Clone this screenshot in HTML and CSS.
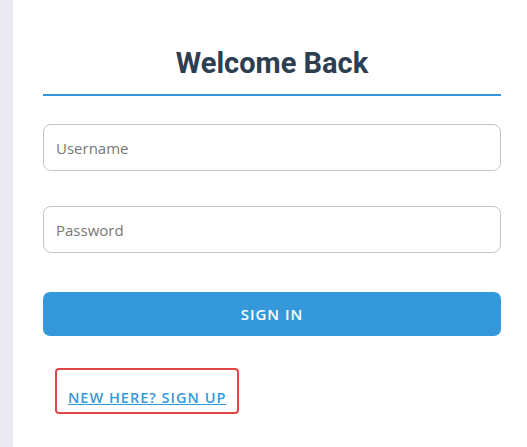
FILE: index.html
```html
<!DOCTYPE html>
<html lang="en">
<head>
    <meta charset="UTF-8">
    <meta name="viewport" content="width=device-width, initial-scale=1.0">
    <title>Sign In</title>
    <link rel="stylesheet" href="styles.css">
</head>
<body>
    <div class="page">
        <div class="sidebar"></div>
        <div class="container">
            <h1 class="title">Welcome Back</h1>
            <form class="login-form">
                <input type="text" class="field" placeholder="Username">
                <input type="password" class="field" placeholder="Password">
                <button type="button" class="btn-signin">Sign In</button>
            </form>
            <div class="signup">
                <a href="#" class="signup-link">New here? Sign up</a>
            </div>
        </div>
    </div>
</body>
</html>
```

FILE: styles.css
```css
html, body {
    margin: 0;
    padding: 0;
    height: 100%;
    background: #fff;
}
body {
    font-family: "Open Sans", "Noto Sans", sans-serif;
}
.page {
    display: flex;
    min-height: 100%;
}
.sidebar {
    width: 13px;
    background-color: #ebeaf0;
    flex-shrink: 0;
}
.container {
    flex: 1;
    padding: 0 26px 0 30px;
}
.title {
    font-family: Roboto, sans-serif;
    font-size: 29px;
    font-weight: 700;
    color: #2c3e50;
    text-align: center;
    margin: 45px 0 0;
    padding-bottom: 13px;
    border-bottom: 2px solid #3498db;
    line-height: 36px;
}
.login-form {
    display: flex;
    flex-direction: column;
    gap: 35px;
    margin-top: 28px;
}
.field {
    height: 47px;
    box-sizing: border-box;
    padding: 0 12px;
    font-family: "Open Sans", sans-serif;
    font-size: 15px;
    border: 1px solid #c4c4c4;
    border-radius: 8px;
    outline: none;
}
.field::placeholder {
    color: #777;
}
.btn-signin {
    height: 44px;
    margin-top: 4px;
    background-color: #3498db;
    color: #fff;
    border: none;
    border-radius: 7px;
    font-family: "Open Sans", sans-serif;
    font-size: 15px;
    font-weight: 600;
    letter-spacing: 1px;
    text-transform: uppercase;
    cursor: pointer;
}
.signup {
    margin-top: 32px;
    padding-left: 12px;
}
.signup-link {
    display: inline-block;
    padding: 18px 11px 5px;
    border: 2px solid #e04848;
    border-radius: 4px;
    color: #3498db;
    font-size: 14.5px;
    font-weight: 600;
    letter-spacing: 1px;
    text-transform: uppercase;
    text-decoration: underline;
}
```
